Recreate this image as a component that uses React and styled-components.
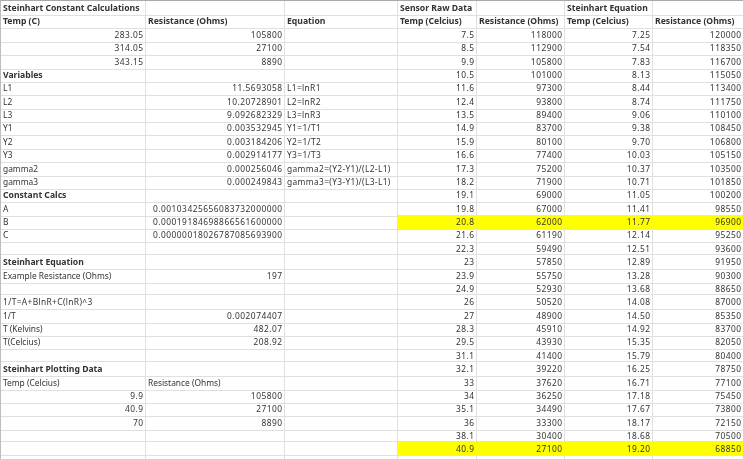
import React from "react";
import styled, { createGlobalStyle } from "styled-components";

const Global = createGlobalStyle`
  html, body { margin: 0; padding: 0; background: #fff; overflow: hidden; }
`;

const Sheet = styled.div`
  width: 743px;
  height: 459px;
  overflow: hidden;
  box-sizing: border-box;
  border-top: 1px solid #a9a9a9;
  border-left: 1px solid #bdbdbd;
  font-family: "Noto Sans", "Noto Sans CJK KR", sans-serif;
  font-size: 8.4px;
  color: #333;
  filter: blur(0.3px);
`;

const Row = styled.div`
  display: grid;
  grid-template-columns: 145px 139px 113px 79px 88px 88px 91px;
  height: 13.38px;
`;

const Cell = styled.div`
  box-sizing: border-box;
  height: 100%;
  padding: 0 1.4px 0 2px;
  background: ${(p) => (p.$mark ? "#ffff00" : "transparent")};
  border-right: 1px solid ${(p) => (p.$mark ? "#ffff00" : "#e0e0e0")};
  border-bottom: 1px solid ${(p) => (p.$mark ? "#ffff00" : "#e0e0e0")};
  white-space: nowrap;
  overflow: ${(p) => (p.$spill ? "visible" : "hidden")};
  line-height: 14px;
  text-align: ${(p) => (p.$kind === "n" ? "right" : "left")};
  font-weight: ${(p) => (p.$kind === "b" ? 700 : 400)};
  font-size: ${(p) => (p.$kind === "b" ? "8.65px" : "8.4px")};
  letter-spacing: ${(p) => (p.$kind === "n" ? "0.5px" : p.$kind === "e" ? "0.36px" : "0")};
`;

const left = [
  ["b:Steinhart Constant Calculations", "", ""],
  ["b:Temp (C)", "b:Resistance (Ohms)", "b:Equation"],
  ["283.05", "105800", ""],
  ["314.05", "27100", ""],
  ["343.15", "8890", ""],
  ["b:Variables", "", ""],
  ["t:L1", "11.5693058", "e:L1=lnR1"],
  ["t:L2", "10.20728901", "e:L2=lnR2"],
  ["t:L3", "9.092682329", "e:L3=lnR3"],
  ["t:Y1", "0.003532945", "e:Y1=1/T1"],
  ["t:Y2", "0.003184206", "e:Y2=1/T2"],
  ["t:Y3", "0.002914177", "e:Y3=1/T3"],
  ["t:gamma2", "0.000256046", "e:gamma2=(Y2-Y1)/(L2-L1)"],
  ["t:gamma3", "0.000249843", "e:gamma3=(Y3-Y1)/(L3-L1)"],
  ["b:Constant Calcs", "", ""],
  ["t:A", "0.00103425656083732000000", ""],
  ["t:B", "0.00019184698866561600000", ""],
  ["t:C", "0.00000018026787085693900", ""],
  ["", "", ""],
  ["b:Steinhart Equation", "", ""],
  ["t:Example Resistance (Ohms)", "197", ""],
  ["", "", ""],
  ["e:1/T=A+BlnR+C(lnR)^3", "", ""],
  ["t:1/T", "0.002074407", ""],
  ["t:T (Kelvins)", "482.07", ""],
  ["t:T(Celcius)", "208.92", ""],
  ["", "", ""],
  ["b:Steinhart Plotting Data", "", ""],
  ["t:Temp (Celcius)", "t:Resistance (Ohms)", ""],
  ["9.9", "105800", ""],
  ["40.9", "27100", ""],
  ["70", "8890", ""],
  ["", "", ""],
  ["", "", ""],
  ["", "", ""],
];

const right = [
  ["b:Sensor Raw Data", "", "b:Steinhart Equation", ""],
  ["b:Temp (Celcius)", "b:Resistance (Ohms)", "b:Temp (Celcius)", "b:Resistance (Ohms)"],
  ["7.5", "118000", "7.25", "120000"],
  ["8.5", "112900", "7.54", "118350"],
  ["9.9", "105800", "7.83", "116700"],
  ["10.5", "101000", "8.13", "115050"],
  ["11.6", "97300", "8.44", "113400"],
  ["12.4", "93800", "8.74", "111750"],
  ["13.5", "89400", "9.06", "110100"],
  ["14.9", "83700", "9.38", "108450"],
  ["15.9", "80100", "9.70", "106800"],
  ["16.6", "77400", "10.03", "105150"],
  ["17.3", "75200", "10.37", "103500"],
  ["18.2", "71900", "10.71", "101850"],
  ["19.1", "69000", "11.05", "100200"],
  ["19.8", "67000", "11.41", "98550"],
  ["20.8", "62000", "11.77", "96900"],
  ["21.6", "61190", "12.14", "95250"],
  ["22.3", "59490", "12.51", "93600"],
  ["23", "57850", "12.89", "91950"],
  ["23.9", "55750", "13.28", "90300"],
  ["24.9", "52930", "13.68", "88650"],
  ["26", "50520", "14.08", "87000"],
  ["27", "48900", "14.50", "85350"],
  ["28.3", "45910", "14.92", "83700"],
  ["29.5", "43930", "15.35", "82050"],
  ["31.1", "41400", "15.79", "80400"],
  ["32.1", "39220", "16.25", "78750"],
  ["33", "37620", "16.71", "77100"],
  ["34", "36250", "17.18", "75450"],
  ["35.1", "34490", "17.67", "73800"],
  ["36", "33300", "18.17", "72150"],
  ["38.1", "30400", "18.68", "70500"],
  ["40.9", "27100", "19.20", "68850"],
  ["", "", "", ""],
];

function renderCell(value, key, opts = {}) {
  const prefixed = /^[bte]:/.test(value);
  const kind = prefixed ? value[0] : "n";
  const text = prefixed ? value.slice(2) : value;
  return (
    <Cell key={key} $kind={kind} $spill={opts.spill} $mark={opts.mark}>
      {text}
    </Cell>
  );
}

export default function App() {
  return (
    <Sheet>
      <Global />
      {left.map((cells, i) => {
        const mark = i === 16 || i === 33;
        return (
          <Row key={i}>
            {renderCell(cells[0], "a", { spill: true })}
            {renderCell(cells[1], "b")}
            {renderCell(cells[2], "c")}
            {right[i].map((v, j) => renderCell(v, "r" + j, { mark }))}
          </Row>
        );
      })}
    </Sheet>
  );
}
